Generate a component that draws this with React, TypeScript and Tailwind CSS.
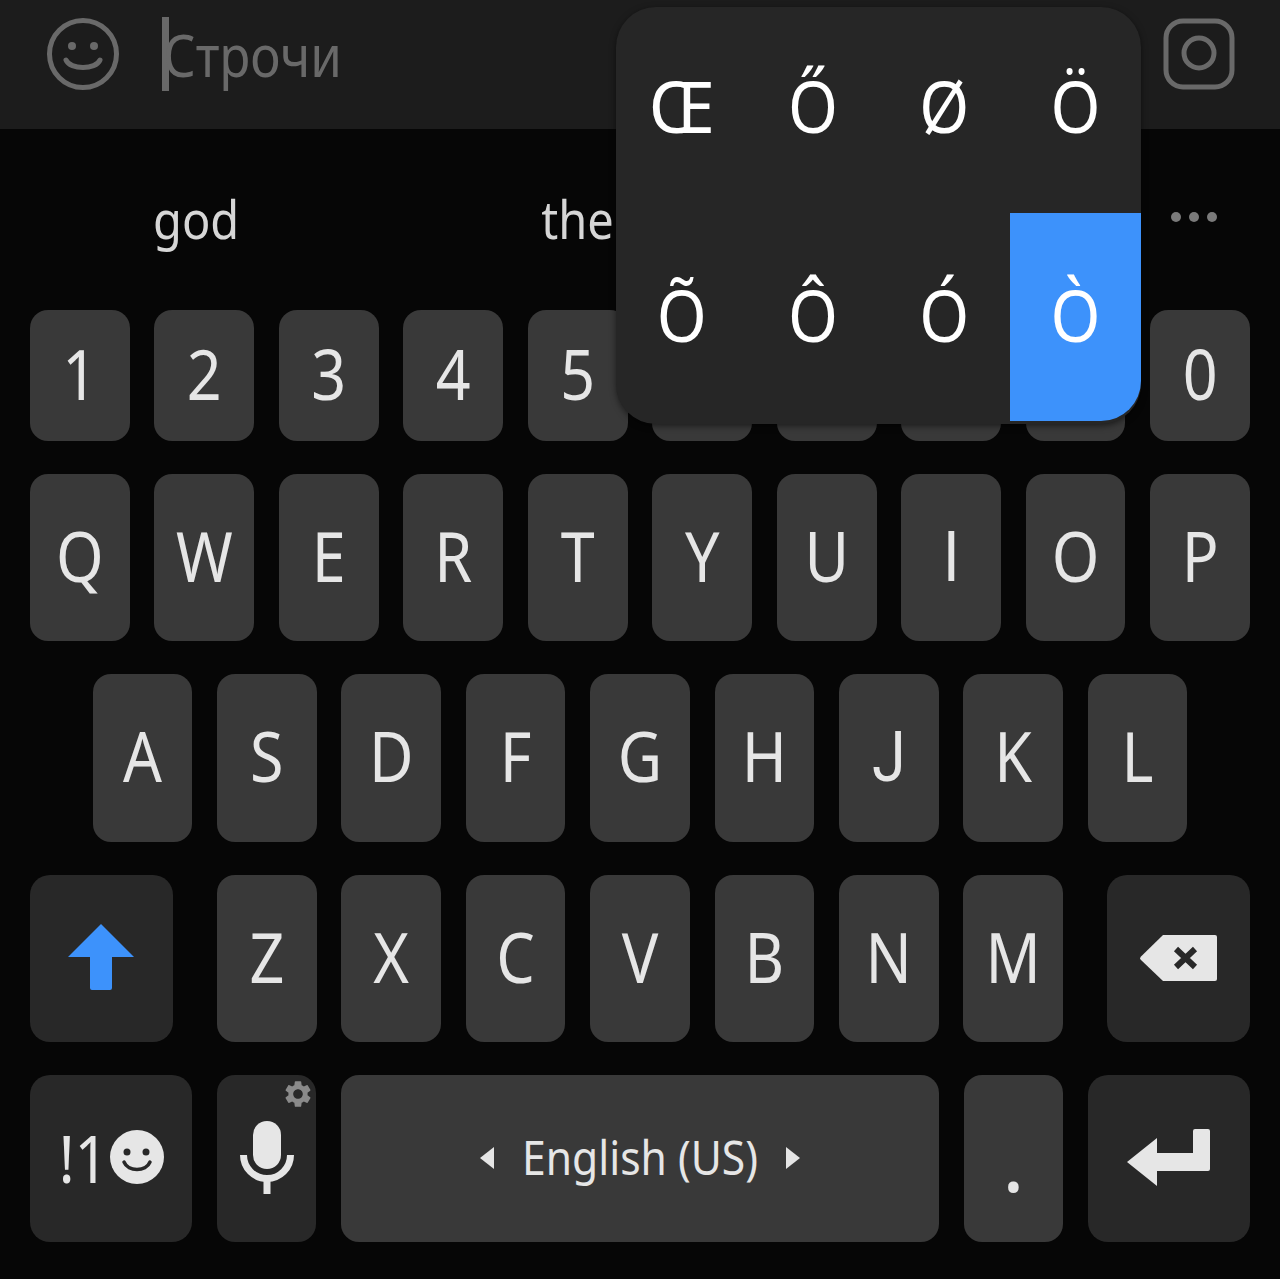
import { MdSettings } from 'react-icons/md';

const FONT = "font-['Noto_Sans',sans-serif]";

const NUMBERS = ['1', '2', '3', '4', '5', '6', '7', '8', '9', '0'];
const TOP_ROW = ['Q', 'W', 'E', 'R', 'T', 'Y', 'U', 'I', 'O', 'P'];
const MID_ROW = ['A', 'S', 'D', 'F', 'G', 'H', 'J', 'K', 'L'];
const LOW_ROW = ['Z', 'X', 'C', 'V', 'B', 'N', 'M'];
const ACCENTS = ['Œ', 'Ő', 'Ø', 'Ö', 'Õ', 'Ô', 'Ó', 'Ò'];

function Letter({ children }: { children: string }) {
  const plain = children === 'I' || children === 'J';
  return (
    <span
      className={`inline-block scale-y-[1.15] text-[61px] leading-none text-[#e6e6e6] ${
        plain ? "font-['Roboto',sans-serif]" : '-translate-y-[3px]'
      }`}
    >
      {children}
    </span>
  );
}

function Key({ label, tall = true }: { label: string; tall?: boolean }) {
  return (
    <div
      className={`flex w-[99.6px] items-center justify-center rounded-[18px] bg-[#393939] ${
        tall ? 'h-[167.25px]' : 'h-[131px]'
      }`}
    >
      <Letter>{label}</Letter>
    </div>
  );
}

function SmileyOutline() {
  return (
    <svg width="74" height="74" viewBox="0 0 74 74" fill="none" stroke="#696969" strokeWidth="5">
      <circle cx="37" cy="37" r="33.5" />
      <circle cx="26" cy="29" r="4" fill="#696969" stroke="none" />
      <circle cx="48" cy="29" r="4" fill="#696969" stroke="none" />
      <path d="M20 43c4 10 30 10 34 0" strokeLinecap="round" />
    </svg>
  );
}

function CameraIcon() {
  return (
    <svg width="72" height="72" viewBox="0 0 72 72" fill="none" stroke="#696969" strokeWidth="5">
      <rect x="3" y="3" width="66" height="66" rx="17" />
      <circle cx="36" cy="35" r="15" />
    </svg>
  );
}

function ShiftIcon() {
  return (
    <svg width="66" height="66" viewBox="0 0 66 66" fill="#3d92fb" className="-translate-x-px -translate-y-px">
      <path d="M33 0 66 33H44V64a2 2 0 0 1-2 2H24a2 2 0 0 1-2-2V33H0Z" />
    </svg>
  );
}

function BackspaceIcon() {
  return (
    <svg width="78" height="47" viewBox="0 0 78 47">
      <path
        d="M23 0H75a2 2 0 0 1 2 2V44a2 2 0 0 1-2 2H23L1 25a2.500 2.500 0 0 1 0-3.500Z"
        fill="#e6e6e6"
      />
      <path d="M36 14 55 32M55 14 36 32" stroke="#282828" strokeWidth="6" />
    </svg>
  );
}

function EnterIcon() {
  return (
    <svg width="84" height="58" viewBox="0 0 84 58" fill="#e6e6e6">
      <path d="M0 33 30 9V24H66V2a2 2 0 0 1 2-2H81a2 2 0 0 1 2 2V40a2 2 0 0 1-2 2H30V57Z" />
    </svg>
  );
}

function SmileyFilled() {
  return (
    <svg width="54" height="54" viewBox="0 0 54 54" className="-translate-y-px">
      <circle cx="27" cy="27" r="27" fill="#e6e6e6" />
      <circle cx="17" cy="22" r="3.500" fill="#282828" />
      <circle cx="36" cy="22" r="3.500" fill="#282828" />
      <path d="M14 32c4 10 22 10 26 0" fill="none" stroke="#282828" strokeWidth="3.500" strokeLinecap="round" />
    </svg>
  );
}

function MicIcon() {
  return (
    <svg width="54" height="74" viewBox="0 0 54 74" fill="none" stroke="#e6e6e6" strokeWidth="7">
      <rect x="13" y="0" width="28" height="48" rx="14" fill="#e6e6e6" stroke="none" />
      <path d="M3.500 34a23.500 23.500 0 0 0 47 0" />
      <path d="M27 58V73" />
    </svg>
  );
}

function Popup() {
  return (
    <div className="absolute left-[616px] top-[7px] grid h-[417px] w-[525px] grid-cols-4 grid-rows-[206px_208px] rounded-[40px] bg-[#262626] shadow-[0_2px_6px_rgba(0,0,0,0.5)]">
      {ACCENTS.map((c, i) => (
        <div
          key={c}
          className={`flex items-center justify-center ${
            c === 'Ò' ? 'rounded-br-[40px] bg-[#3d92fb]' : ''
          }`}
        >
          <span
            className={`inline-block scale-y-[1.1] text-[64px] leading-none text-white ${
              i < 4 ? '-translate-y-[3px]' : '-translate-y-px'
            } ${c === 'Œ' ? 'scale-x-[1.12]' : ''}`}
          >
            {c}
          </span>
        </div>
      ))}
    </div>
  );
}

export default function App() {
  return (
    <div className={`relative h-[1279px] w-[1280px] overflow-hidden bg-[#060606] ${FONT}`}>
      <div className="flex h-[129px] items-center bg-[#1c1c1c] pb-[21px] pl-[46px] pr-[45px]">
        <SmileyOutline />
        <div className="ml-[42px] h-[74px] w-[7px] bg-[#696969]" />
        <span className="-ml-[6px] inline-block scale-y-[1.13] text-[51px] leading-none text-[#696969]">
          Строчи
        </span>
        <div className="ml-auto">
          <CameraIcon />
        </div>
      </div>

      <div className="flex h-[181px] items-center text-[#d6d6d6]">
        <span className="ml-[153px] inline-block scale-y-[1.13] text-[47px] leading-none">god</span>
        <span className="ml-[302px] inline-block scale-y-[1.13] text-[47px] leading-none">the</span>
        <div className="ml-auto mr-[63px] flex -translate-y-[3px] gap-[8px]">
          <div className="size-[10px] rounded-full bg-[#7a7a7a]" />
          <div className="size-[10px] rounded-full bg-[#7a7a7a]" />
          <div className="size-[10px] rounded-full bg-[#7a7a7a]" />
        </div>
      </div>

      <div className="flex flex-col gap-[33px] px-[30px]">
        <div className="flex justify-between">
          {NUMBERS.map((k) => (
            <Key key={k} label={k} tall={false} />
          ))}
        </div>
        <div className="flex justify-between">
          {TOP_ROW.map((k) => (
            <Key key={k} label={k} />
          ))}
        </div>
        <div className="flex justify-center gap-[24.8px]">
          {MID_ROW.map((k) => (
            <Key key={k} label={k} />
          ))}
        </div>
        <div className="flex justify-between">
          <div className="flex h-[167.25px] w-[143px] items-center justify-center rounded-[20px] bg-[#282828]">
            <ShiftIcon />
          </div>
          <div className="flex gap-[24.8px]">
            {LOW_ROW.map((k) => (
              <Key key={k} label={k} />
            ))}
          </div>
          <div className="flex h-[167.25px] w-[143px] items-center justify-center rounded-[20px] bg-[#282828]">
            <BackspaceIcon />
          </div>
        </div>
        <div className="flex justify-between">
          <div className="flex h-[167.25px] w-[162px] items-center justify-center gap-[2px] rounded-[20px] bg-[#282828] pl-px">
            <span className="inline-block scale-y-[1.1] text-[59px] leading-none text-[#e6e6e6]">!1</span>
            <SmileyFilled />
          </div>
          <div className="relative flex h-[167.25px] w-[99.6px] items-center justify-center rounded-[18px] bg-[#282828]">
            <MicIcon />
            <MdSettings className="absolute right-[2px] top-[3px] text-[32px] text-[#8a8a8a]" />
          </div>
          <div className="flex h-[167.25px] w-[598px] items-center justify-center gap-[28px] rounded-[18px] bg-[#393939]">
            <svg width="14" height="22" viewBox="0 0 14 22" fill="#e6e6e6">
              <path d="M14 0V22L0 11Z" />
            </svg>
            <span className="inline-block -translate-y-[2px] scale-y-[1.1] text-[42.6px] leading-none text-[#e6e6e6]">
              English (US)
            </span>
            <svg width="14" height="22" viewBox="0 0 14 22" fill="#e6e6e6">
              <path d="M0 0V22L14 11Z" />
            </svg>
          </div>
          <div className="flex h-[167.25px] w-[99.6px] items-end justify-center rounded-[18px] bg-[#393939] pb-[40px]">
            <span className="text-[85px] leading-none text-[#e6e6e6]">.</span>
          </div>
          <div className="flex h-[167.25px] w-[162px] items-center justify-center rounded-[20px] bg-[#282828]">
            <EnterIcon />
          </div>
        </div>
      </div>

      <Popup />
    </div>
  );
}
